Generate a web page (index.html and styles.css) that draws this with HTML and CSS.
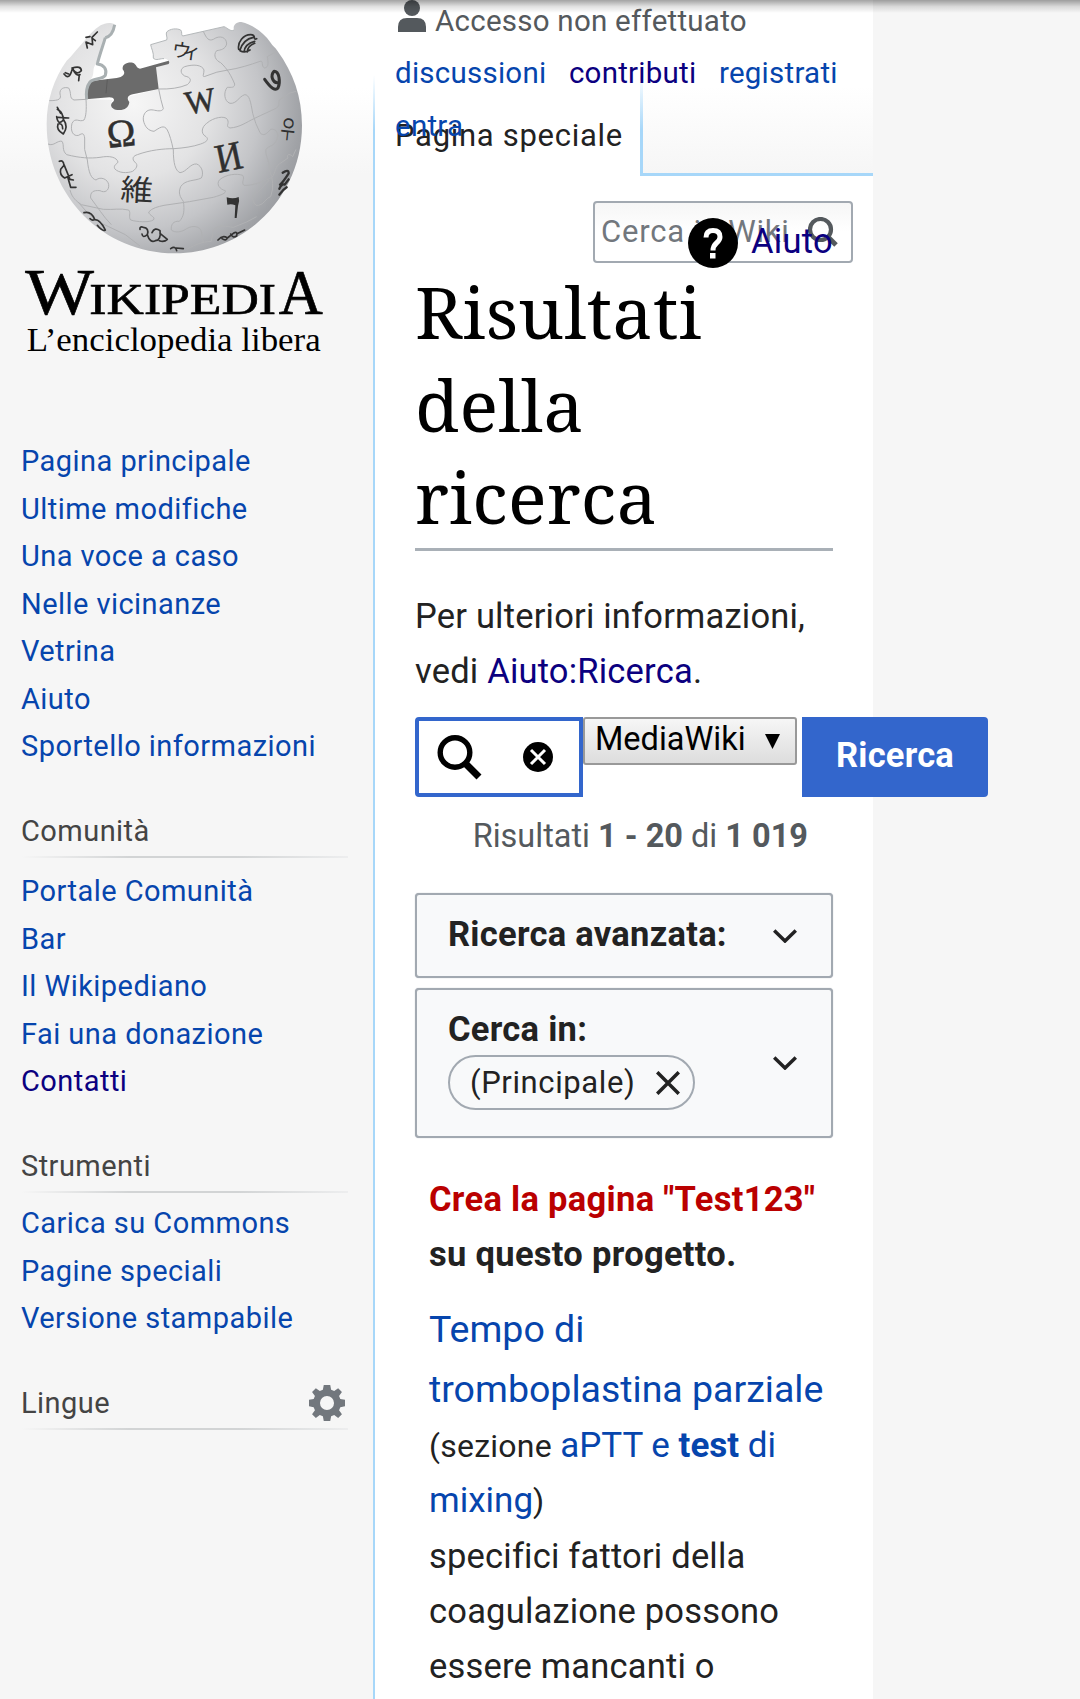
FILE: index.html
```html
<!DOCTYPE html>
<html lang="it">
<head>
<meta charset="utf-8">
<title>Risultati della ricerca - Wikipedia</title>
<link rel="stylesheet" href="styles.css">
</head>
<body>
<div class="page">
  <aside class="sidebar">
    <a class="logo" href="#">
      <svg viewBox="0 0 1080 1140" width="360" height="380" role="img" aria-label="Wikipedia, L'enciclopedia libera">
        <defs>
          <radialGradient id="ball" gradientUnits="userSpaceOnUse" cx="400" cy="310" r="560">
            <stop offset="0" stop-color="#f6f6f6"/><stop offset=".4" stop-color="#e3e3e4"/>
            <stop offset=".68" stop-color="#c4c5c8"/><stop offset=".9" stop-color="#a0a2a6"/><stop offset="1" stop-color="#94969b"/>
          </radialGradient>
        </defs>
        <path fill="url(#ball)" d="M258 298C250 270 262 252 274 236C285 221 275 205 288 192C300 160 308 135 316 113C326 114 345 90 344 73C332 66 315 68 302 76C282 88 264 110 245 132C228 150 216 168 200 182C162 235 140 300 140 372C140 590 312 760 524 760C735 760 906 590 906 376C906 290 880 218 832 152C826 142 818 138 812 128C790 96 756 74 724 66C706 66 698 78 702 90C690 96 684 84 672 80L548 108C542 104 548 96 542 90C530 84 510 86 500 96C496 104 504 112 500 120L452 134C454 146 462 158 460 174C466 184 484 174 492 176C504 176 508 184 506 190L466 202L476 267L385 290C388 312 374 332 352 330C332 328 330 312 338 300L258 298Z"/>
        <path class="edge" d="M702 90C690 96 684 84 672 80L548 108C542 104 548 96 542 90C530 84 510 86 500 96C496 104 504 112 500 120L452 134C454 146 462 158 460 174C466 184 484 174 492 176"/>
        <path fill="#6b6b6b" d="M268 244L350 234C368 232 380 222 368 208C366 192 382 186 398 188C410 192 408 204 420 206L506 182Q510 188 506 192L468 202L476 267L398 283C382 286 380 296 388 306C386 324 372 332 352 330C338 328 328 318 336 308C346 302 344 292 328 292L258 298Q252 266 268 244Z"/>
        <path class="rim" d="M316 113C308 140 298 166 292 192C312 194 322 208 316 226C306 240 282 232 270 246Q256 264 260 298M316 113Q338 108 344 74"/>
        <path fill="none" stroke="#555" stroke-width="2" d="M322 238L318 280"/>
        <g class="seam">
          <path d="M148 302C180 302 184 296 180 282C178 266 192 260 206 264C216 280 206 294 222 300L258 298C260 330 258 350 252 360C238 368 226 350 216 370C210 394 220 410 236 406C248 398 252 400 254 414Q250 450 262 480C266 520 274 536 288 540C302 528 324 538 326 554C328 572 314 580 300 572C280 570 270 576 272 594C292 620 310 650 334 674"/>
          <path d="M144 432C162 440 172 420 186 424C194 436 184 450 200 464C240 474 270 476 300 472C330 466 350 472 354 486C350 494 340 494 344 506C356 520 382 520 398 514C414 502 414 492 402 484C396 474 400 468 412 464C450 450 490 446 522 446C550 444 580 440 602 432C620 426 628 418 618 410C600 400 606 380 620 370C640 352 674 346 682 358C690 372 674 378 690 384C720 382 740 366 762 356C790 342 810 334 830 324C840 316 834 306 840 298C850 290 862 290 866 280L888 274"/>
          <path d="M476 267Q482 300 490 326C486 336 470 332 460 330C440 326 428 342 430 360C434 380 444 392 462 394C478 384 492 372 502 390Q512 410 520 450C520 490 526 512 540 518C560 516 570 490 590 492C606 498 612 520 604 534C584 544 556 538 542 560C534 580 540 590 550 604C554 630 552 650 538 664C520 662 512 674 514 690C526 700 546 696 560 686C580 674 600 680 604 694L610 728"/>
          <path d="M476 267C510 268 538 264 562 254C576 242 574 232 554 228C540 220 540 206 554 200C580 192 606 194 612 210C612 224 604 234 618 228Q650 214 684 210C714 206 752 194 780 184C792 180 782 200 794 204C808 202 804 184 802 170L830 154"/>
          <path d="M610 94C620 116 626 124 640 118C660 104 680 112 680 132C676 148 662 150 650 152C638 166 648 182 662 188C682 206 694 228 704 252C704 264 694 262 682 262C670 276 672 304 690 310C710 312 716 290 734 284C748 284 752 304 758 340Q766 372 780 398C790 410 800 402 812 388C830 384 838 404 830 420C822 440 806 436 798 448C794 468 812 486 808 510Q826 550 812 590"/>
          <path d="M210 570C216 594 230 604 244 614L310 628C340 630 360 624 386 630C394 640 384 650 392 660C410 666 448 668 460 660C468 650 448 648 446 636C456 624 474 620 492 616Q570 606 640 592C666 584 678 580 676 572C660 568 648 554 658 540C678 522 712 520 728 526C736 538 722 546 732 556C756 558 784 546 808 536C830 526 820 504 838 492L864 474C858 462 870 460 878 470L888 448"/>
          <path d="M236 608Q280 664 326 680L376 704L420 738M560 748C590 732 604 726 634 724L640 690C656 672 680 680 700 682Q744 666 770 650M812 590C796 594 792 618 768 616C752 600 756 582 774 576L808 540"/>
        </g>
        <g class="glyph">
          <text x="320" y="440" font-size="118" transform="rotate(-6 364 400)" textLength="86" lengthAdjust="spacingAndGlyphs">Ω</text>
          <text x="554" y="336" font-size="100" transform="rotate(-10 604 300)" textLength="92" lengthAdjust="spacingAndGlyphs">W</text>
          <text x="646" y="512" font-size="122" transform="rotate(-12 686 470)" textLength="80" lengthAdjust="spacingAndGlyphs">И</text>
          <text class="cjk" x="362" y="602" font-size="88" textLength="98" lengthAdjust="spacingAndGlyphs" transform="rotate(3 410 570)">維</text>
          <text class="cjk" x="516" y="174" font-size="58" textLength="88" transform="rotate(8 560 152)">ウィ</text>
          <text class="cjk" x="842" y="415" font-size="76" textLength="44" lengthAdjust="spacingAndGlyphs" transform="rotate(6 866 390)">우</text>
        </g>
        <g class="ink">
          <path fill="#333" stroke="none" d="M680 592Q700 598 716 591Q720 604 714 618L710 654L704 654L706 616Q694 610 682 614Z"/>
          <path stroke-width="9" d="M834 248C818 250 810 226 822 214C838 214 842 246 834 264Q822 278 794 238"/>
          <path d="M716 148C712 126 730 104 752 104C772 104 756 122 770 116M720 150Q730 118 760 112M732 156Q734 132 764 124M742 156Q742 138 764 130M720 152Q734 160 750 150"/>
          <path d="M292 96L276 112L278 134L258 126L262 144M270 110L258 112M278 116L286 122"/>
          <path d="M192 222Q206 240 214 216L218 204Q226 230 240 224M216 204Q244 196 244 212Q232 226 220 210M238 224L236 242M196 218L206 222"/>
          <path d="M172 328Q190 338 190 360Q174 378 170 350M174 352L206 354M190 358Q206 380 190 402Q168 390 174 372Q188 368 188 386M172 322L182 340"/>
          <path d="M178 484Q190 478 192 496L182 508Q178 524 194 534L216 524M192 494L210 538L220 540M204 534L212 562L228 562"/>
          <path d="M252 638Q274 632 284 658Q278 664 270 656M278 660Q298 652 316 690Q308 696 292 676"/>
          <path d="M420 688Q418 678 430 682Q448 684 442 704Q428 716 426 702M442 704Q450 730 466 722Q484 720 480 692Q464 680 456 698M480 700L502 718Q492 728 478 722"/>
          <path d="M512 746Q526 736 530 752M528 744L550 746M654 720Q668 704 682 714Q678 724 666 716M682 714L700 700Q714 692 710 708Q698 716 692 702M714 700L734 690"/>
          <path stroke-width="7" d="M848 518Q866 506 866 520Q848 548 840 554M866 538L854 554Q846 550 838 566M860 562Q850 568 838 584"/>
        </g>
        <g class="wordmark">
          <text x="76" y="943" font-size="194" textLength="206" lengthAdjust="spacingAndGlyphs">W</text>
          <text x="268" y="943" font-size="136" textLength="560" lengthAdjust="spacingAndGlyphs">IKIPEDI</text>
          <text x="836" y="943" font-size="192" textLength="132" lengthAdjust="spacingAndGlyphs">A</text>
          <text class="tagline" x="80" y="1052" font-size="101" textLength="882" lengthAdjust="spacingAndGlyphs">L’enciclopedia libera</text>
        </g>
      </svg>
    </a>
    <nav class="portal">
      <ul>
        <li><a href="#">Pagina principale</a></li><li><a href="#">Ultime modifiche</a></li><li><a href="#">Una voce a caso</a></li><li><a href="#">Nelle vicinanze</a></li><li><a href="#">Vetrina</a></li><li><a href="#">Aiuto</a></li><li><a href="#">Sportello informazioni</a></li>
      </ul>
    </nav>
    <nav class="portal community">
      <h3>Comunità</h3>
      <ul>
        <li><a href="#">Portale Comunità</a></li><li><a href="#">Bar</a></li><li><a href="#">Il Wikipediano</a></li><li><a href="#">Fai una donazione</a></li><li><a class="visited" href="#">Contatti</a></li>
      </ul>
    </nav>
    <nav class="portal">
      <h3>Strumenti</h3>
      <ul>
        <li><a href="#">Carica su Commons</a></li><li><a href="#">Pagine speciali</a></li><li><a href="#">Versione stampabile</a></li>
      </ul>
    </nav>
    <nav class="portal">
      <h3>Lingue
        <svg class="gear" viewBox="0 0 20 20" width="36" height="36"><path fill="#72777d" fill-rule="evenodd" d="M8.200 0h3.600l.5 2.700 1.700.7L16.200 1.800 18.300 3.900l-1.600 2.200.7 1.700L20 8.200v3.600l-2.600.5-.7 1.700 1.600 2.200-2.100 2.100-2.200-1.600-1.700.7-.5 2.600H8.200l-.5-2.600-1.700-.7-2.200 1.600-2.100-2.100L3.300 14l-.7-1.700L0 11.800V8.200l2.600-.4.7-1.700-1.600-2.200 2.100-2.100L6 3.400l1.700-.7zM10 6.100a3.900 3.900 0 1 0 0 7.800 3.900 3.900 0 0 0 0-7.800z"/></svg>
      </h3>
    </nav>
  </aside>

  <main class="column">
    <header class="head">
      <div class="tab">Pagina speciale</div>
      <div class="tabrest"></div>
      <nav class="personal">
        <div class="anon"><svg viewBox="0 0 28 32" width="28" height="32"><circle cx="14" cy="8" r="8" fill="#54595d"/><path fill="#54595d" d="M0 32V27Q0 18 9 18H19Q28 18 28 27V32Z"/></svg><span>Accesso non effettuato</span></div>
        <div class="links"><a href="#">discussioni</a><a class="visited" href="#">contributi</a><a href="#">registrati</a><a href="#">entra</a></div>
      </nav>
      <div class="quick"><span>Cerca in Wiki</span><svg viewBox="0 0 30 30" width="30" height="30" fill="none" stroke="#54595d"><circle cx="12.500" cy="12.500" r="10.500" stroke-width="4.200"/><path d="M20 20L28 28" stroke-width="5"/></svg></div>
      <a class="help visited" href="#"><svg viewBox="0 0 50 50" width="50" height="50"><circle cx="25" cy="25" r="25"/><path fill="none" stroke="#fff" stroke-width="5" d="M18 19.500Q18 12.500 25 12.500T32 19Q32 22 28.500 25T25 32.500"/><path fill="#fff" d="M22 35h5.500v5.500H22z"/></svg><span>Aiuto</span></a>
    </header>
    <section class="content">
      <h1>Risultati<br>della<br>ricerca</h1>
      <p class="intro">Per ulteriori informazioni,<br>vedi <a class="visited" href="#">Aiuto:Ricerca</a>.</p>
      <form class="search">
        <div class="field">
          <svg viewBox="0 0 45 45" width="45" height="45" fill="none" stroke="#000"><circle cx="18" cy="17.500" r="14.800" stroke-width="5.400"/><path d="M28 28L42 42" stroke-width="7"/></svg>
          <svg viewBox="0 0 30 30" width="30" height="30"><circle cx="15" cy="15" r="15"/><path d="M8 8L22 22M22 8L8 22" stroke="#fff" stroke-width="3"/></svg>
        </div>
        <div class="select"><span>MediaWiki</span><svg viewBox="0 0 15 15" width="15" height="15"><path d="M0 0H15L7.500 15Z"/></svg></div>
        <div class="button">Ricerca</div>
      </form>
      <div class="count">Risultati <b>1 - 20</b> di <b>1 019</b></div>
      <div class="panel"><div class="label">Ricerca avanzata:</div><svg class="chev" viewBox="0 0 24 14" width="24" height="14"><path d="M1.200 1.500L12 12L22.800 1.500"/></svg></div>
      <div class="panel namespaces">
        <div class="group"><div class="label">Cerca in:</div><div class="pill"><span>(Principale)</span><svg viewBox="0 0 24 24" width="24" height="24"><path d="M1.200 1.200L22.800 22.800M22.800 1.200L1.200 22.800"/></svg></div></div>
        <svg class="chev" viewBox="0 0 24 14" width="24" height="14"><path d="M1.200 1.500L12 12L22.800 1.500"/></svg>
      </div>
      <div class="results">
        <p class="create"><a class="new" href="#">Crea la pagina "Test123"</a><br>su questo progetto.</p>
        <div class="title"><a href="#">Tempo di<br>tromboplastina parziale</a></div>
        <div class="section"><small>(sezione </small><a href="#">aPTT e <b>test</b> di<br>mixing</a><small>)</small></div>
        <div class="extract">specifici fattori della<br>coagulazione possono<br>essere mancanti o</div>
      </div>
    </section>
  </main>
  <div class="shade"></div>
</div>
</body>
</html>
```
FILE: styles.css
```css
* { box-sizing: border-box; }
body { margin: 0; background: #f6f6f6; color: #222; font-family: Roboto, sans-serif; overflow: hidden; }
svg { display: block; flex: none; }
a { color: #0645ad; text-decoration: none; }
a.visited { color: #0b0080; }
a.new { color: #ba0000; }
.page { position: relative; display: flex; width: 1080px; height: 1699px; overflow: hidden; }
.shade { position: absolute; left: 0; right: 0; top: 0; height: 13px; background: linear-gradient(rgba(0,0,0,.36), rgba(0,0,0,.12) 50%, rgba(0,0,0,0)); }

/* Sidebar */
.sidebar { width: 373px; flex: none; background: linear-gradient(#fff 50%, #f6f6f6) 0 0 / 100% 175px no-repeat; }
.logo { display: block; height: 438px; }
.rim { fill: none; stroke: #a9b0b2; stroke-width: 9; stroke-linejoin: round; }
.edge { fill: none; stroke: #b4b8ba; stroke-width: 3; }
.seam path { fill: none; stroke: #b0b1b3; stroke-width: 3; stroke-linejoin: round; }
.glyph { fill: #303030; stroke: #303030; stroke-width: 1.5px; font-family: "Liberation Serif", serif; }
.cjk { font-family: "Noto Sans CJK JP", "Noto Sans CJK KR", sans-serif; stroke: none; }
.ink { fill: none; stroke: #333; stroke-width: 5; stroke-linecap: round; stroke-linejoin: round; }
.wordmark { font-family: "Liberation Serif", serif; fill: #000; stroke: #000; stroke-width: 2px; }
.tagline { stroke-width: 0; }
.portal { padding-left: 21px; font-size: 29px; letter-spacing: .45px; line-height: 47.5px; margin-bottom: 37.500px; }
.portal ul { list-style: none; margin: 0; padding: 0; }
.portal h3 { display: flex; justify-content: space-between; width: 327px; height: 50px; margin: 0 0 7px; padding-right: 3px; font-size: 29px; font-weight: 400; color: #444; background: linear-gradient(to right, rgba(200,204,209,0), #d2d4d5 33%, #d2d4d5 66%, rgba(200,204,209,.2)) 0 100% / 100% 2px no-repeat; }
.portal.community h3 { margin-bottom: 10px; }
.gear { margin-top: 5px; }

/* Page column */
.column { width: 500px; flex: none; background: linear-gradient(#fff, #a7d7f9 55px) 0 75px / 2px 100% no-repeat, #fff; padding-left: 2px; }
.head { position: relative; display: flex; height: 176px; }
.tab { width: 265px; padding: 109px 0 0 20px; font-size: 31px; letter-spacing: .7px; line-height: 54px; white-space: nowrap; }
.tabrest { flex: 1; border-bottom: 3px solid #a7d7f9; background: linear-gradient(#fff, #a7d7f9 55px) 0 75px / 3px 100% no-repeat, linear-gradient(#fff 50%, #f6f6f6); }
.personal { position: absolute; left: 20px; top: 0; width: 470px; font-size: 29.5px; letter-spacing: .25px; line-height: 52.5px; }
.anon { display: flex; gap: 9px; height: 47px; line-height: 42px; color: #54595d; padding-left: 3px; }
.links { display: flex; flex-wrap: wrap; column-gap: 22.5px; }
.quick { position: absolute; left: 218px; top: 201px; width: 260px; height: 62px; display: flex; align-items: center; justify-content: space-between; padding: 0 13px 0 6px; border: 2px solid #a2a9b1; border-radius: 4px; background: linear-gradient(#f6f6f6, #fff 50%); color: #72777d; font-size: 31px; letter-spacing: .8px; line-height: 56px; white-space: nowrap; }
.help { position: absolute; left: 313px; top: 218px; display: flex; gap: 13px; font-size: 34.5px; letter-spacing: .3px; line-height: 47px; }

.content { padding: 86px 40px 0; font-size: 34.5px; letter-spacing: .2px; line-height: 55px; }
h1 { margin: 0; padding-top: 3px; height: 289px; border-bottom: 3px solid #a9b0b7; font: 72px/92.5px "Noto Serif", "DejaVu Serif Condensed", "DejaVu Serif", serif; color: #000; }
.intro { margin: 38px 0 19px; white-space: nowrap; }
.search { display: flex; width: 573px; height: 80px; margin-top: -1px; }
.field { width: 168px; border: 4px solid #36c; border-radius: 4px 0 0 4px; background: #fff; padding: 0 26px 0 18px; display: flex; align-items: center; justify-content: space-between; }
.select { width: 214px; height: 48px; margin-right: 5px; padding: 0 15px 0 10px; display: flex; align-items: center; justify-content: space-between; border: 2px solid #999; border-radius: 3px; background: linear-gradient(#f6f6f6, #ddd); color: #000; font-size: 32.5px; letter-spacing: 0; line-height: 42px; }
.select span { position: relative; top: -2px; }
.button { width: 186px; border-radius: 0 4px 4px 0; background: #36c; color: #fff; font-weight: 700; text-align: center; line-height: 76px; }
.count { margin: 12px 0 29px; padding-right: 25px; text-align: right; color: #54595d; font-size: 32.5px; letter-spacing: 0; }
.panel { width: 418px; height: 85px; display: flex; justify-content: space-between; align-items: center; border: 2px solid #a2a9b1; box-shadow: 0 0 1px #a2a9b1; border-radius: 4px; background: #f8f9fa; padding: 0 34px 0 31px; margin-bottom: 10px; }
.label { font-weight: 700; height: 55px; line-height: 52px; letter-spacing: .27px; }
.panel svg path { fill: none; stroke: #222; stroke-width: 3.5; }
.panel.namespaces { height: 150px; margin: 0; }
.group { align-self: flex-start; padding-top: 12px; }
.namespaces .label { height: 53px; line-height: 54px; }
.pill { width: 247px; height: 55px; border: 2px solid #a2a9b1; border-radius: 28px; display: flex; align-items: center; justify-content: space-between; padding: 0 13px 0 20px; font-size: 31px; letter-spacing: .6px; line-height: 50px; }
.results { padding-left: 14px; margin-top: 34px; white-space: nowrap; }
.create { margin: 0 0 17px; font-weight: 700; letter-spacing: .3px; }
.title { font-size: 37.5px; line-height: 60px; letter-spacing: 0; }
.section { font-size: 35px; line-height: 54.5px; letter-spacing: 0; }
.section small { font-size: 32px; letter-spacing: .25px; }
.extract { margin-top: 1px; }
```
